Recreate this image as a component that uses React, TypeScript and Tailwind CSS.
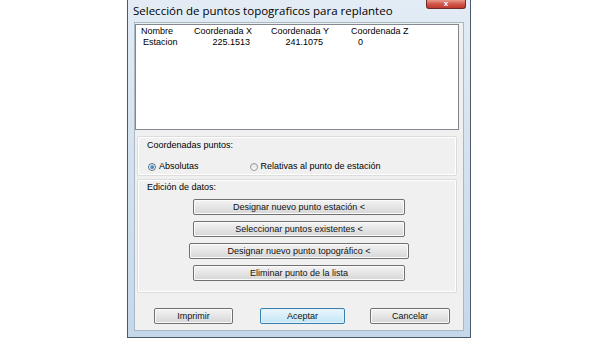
import React from "react";

const font = { fontFamily: '"Liberation Sans", Arial, sans-serif' };

function Btn({ children, w, def = false, ml = 0 }: { children: React.ReactNode; w: number; def?: boolean; ml?: number }) {
  return (
    <div
      className={
        "h-[16px] flex items-center justify-center text-[9px] leading-none text-[#111] rounded-[2px] border " +
        (def
          ? "border-[#3c7fb1] bg-gradient-to-b from-[#eaf6fd] to-[#c4e5f6] shadow-[inset_0_0_0_1px_#dff2fc]"
          : "border-[#707070] bg-gradient-to-b from-[#f4f4f4] to-[#d6d6d6] shadow-[inset_0_0_0_1px_#fbfbfb]")
      }
      style={{ width: w, marginLeft: ml }}
    >
      {children}
    </div>
  );
}

export default function App() {
  return (
    <div className="w-[600px] h-[339px] bg-white overflow-hidden" style={font}>
      <div className="ml-[127px] w-[344px] h-[338px] border border-[#4b5a68] border-t-0 bg-gradient-to-b from-[#e3ecf5] via-[#d3e1ee] to-[#c5d8ea] flex flex-col relative">
        {/* title bar */}
        <div className="h-[22px] flex items-center pl-[5px] shrink-0">
          <span className="text-[11.5px] text-black" style={{ fontFamily: '"Open Sans", "Noto Sans", sans-serif' }}>
            Selección de puntos topograficos para replanteo
          </span>
        </div>
        <div className="absolute right-[4px] top-0 w-[40px] h-[9px] rounded-b-[3px] border border-t-0 border-[#6d2a2a] bg-gradient-to-b from-[#e79a8a] via-[#d0564a] to-[#c0392b] flex items-center justify-center">
          <span className="text-white text-[8px] font-bold leading-none -mt-[1px]">x</span>
        </div>
        {/* client */}
        <div className="mx-[6px] mb-[6px] flex-1 bg-[#f0f0f0] border border-[#a9b8c7] flex flex-col">
          {/* list */}
          <div className="mt-[1px] ml-[0px] w-[324px] h-[106px] bg-white border border-[#828790] text-[9px] text-black leading-none">
            <div className="flex h-[11px] items-end">
              <span className="ml-[5px] w-[53px]">Nombre</span>
              <span className="w-[77px]">Coordenada X</span>
              <span className="w-[80px]">Coordenada Y</span>
              <span>Coordenada Z</span>
            </div>
            <div className="flex h-[11px] items-end">
              <span className="ml-[7px] w-[51px]">Estacion</span>
              <span className="w-[56px] text-right">225.1513</span>
              <span className="w-[73px] text-right">241.1075</span>
              <span className="ml-[35px]">0</span>
            </div>
          </div>
          {/* group 1 */}
          <div className="mt-[6px] ml-[2px] w-[320px] h-[40px] border border-[#dcdcdc] rounded-[2px] shadow-[inset_0_0_0_1px_#ffffff] flex flex-col text-[9px] text-black leading-none">
            <span className="ml-[9px] mt-[4px]">Coordenadas puntos:</span>
            <div className="flex items-center mt-[12px] ml-[10px]">
              <span className="w-[8px] h-[8px] rounded-full border border-[#5a6f84] bg-gradient-to-b from-[#e8edf2] to-[#ffffff] flex items-center justify-center">
                <span className="w-[4px] h-[4px] rounded-full bg-gradient-to-br from-[#7fc6f4] to-[#1f5e9a]" />
              </span>
              <span className="ml-[3px]">Absolutas</span>
              <span className="ml-[51px] w-[8px] h-[8px] rounded-full border border-[#9a9b9b] bg-gradient-to-b from-[#e4e4e4] to-[#fafafa]" />
              <span className="ml-[3px]">Relativas al punto de estación</span>
            </div>
          </div>
          {/* group 2 */}
          <div className="mt-[3px] ml-[2px] w-[320px] h-[114px] border border-[#dcdcdc] rounded-[2px] shadow-[inset_0_0_0_1px_#ffffff] flex flex-col text-[9px] text-black leading-none">
            <span className="ml-[9px] mt-[3px]">Edición de datos:</span>
            <div className="flex flex-col items-start ml-[55px] mt-[7px] gap-[6px]">
              <Btn w={212}>Designar nuevo punto estación &lt;</Btn>
              <Btn w={212}>Seleccionar puntos existentes &lt;</Btn>
              <Btn w={220} ml={-4}>Designar nuevo punto topográfico &lt;</Btn>
              <Btn w={212}>Eliminar punto de la lista</Btn>
            </div>
          </div>
          {/* bottom buttons */}
          <div className="flex mt-[15px] ml-[19px] gap-[27px]">
            <Btn w={79}>Imprimir</Btn>
            <Btn w={85} def>Aceptar</Btn>
            <Btn w={80} ml={-2}>Cancelar</Btn>
          </div>
        </div>
      </div>
    </div>
  );
}
